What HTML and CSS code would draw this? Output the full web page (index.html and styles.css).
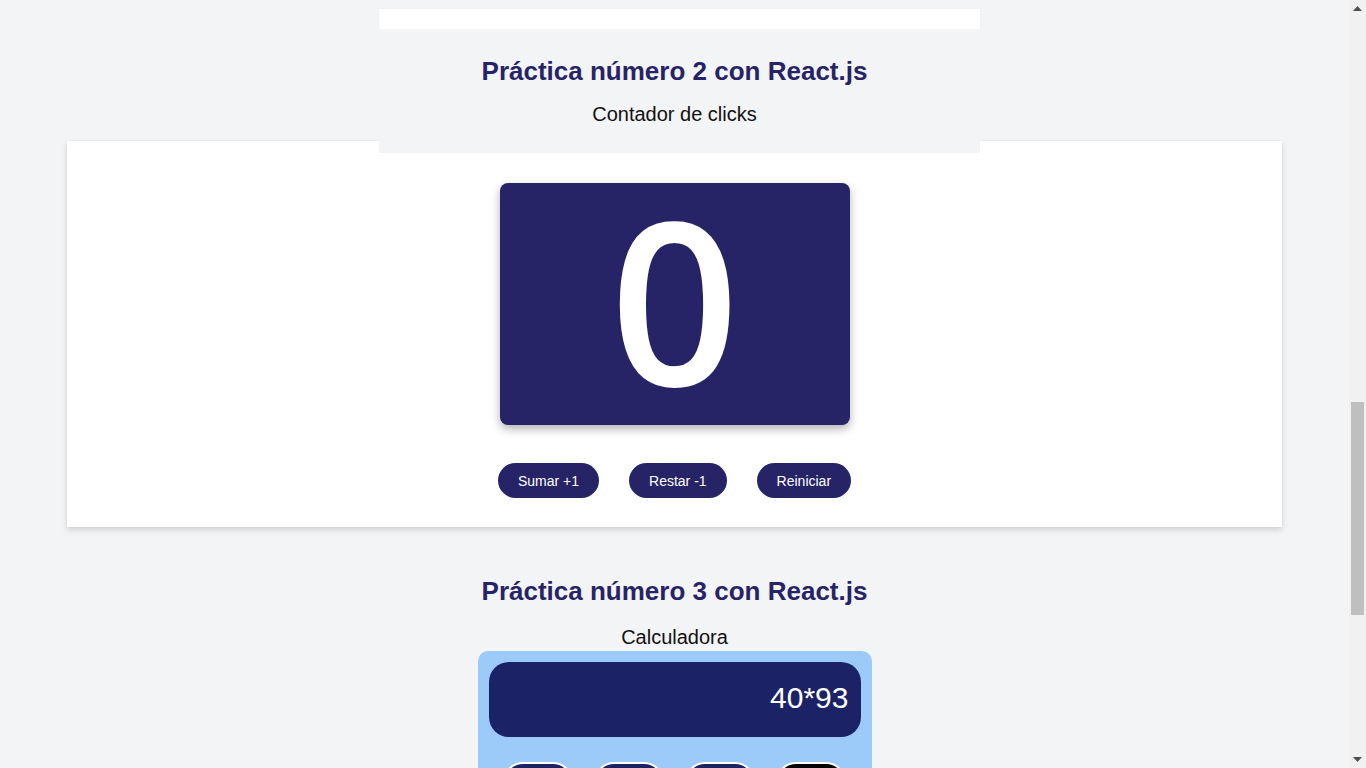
FILE: index.html
```html
<!DOCTYPE html>
<html lang="es">
<head>
<meta charset="utf-8">
<title>Prácticas React.js</title>
<link rel="stylesheet" href="styles.css">
</head>
<body>
<div class="viewport">
  <main class="page">
    <div class="prev-bottom"></div>

    <section class="practice">
      <header class="practice-head">
        <h2 class="practice-title">Práctica número 2 con React.js</h2>
        <p class="practice-sub">Contador de clicks</p>
      </header>
      <div class="card">
        <div class="counter-box"><span class="counter-value">0</span></div>
        <div class="counter-actions">
          <button class="pill-btn">Sumar +1</button>
          <button class="pill-btn">Restar -1</button>
          <button class="pill-btn">Reiniciar</button>
        </div>
      </div>
    </section>

    <section class="practice practice-calc">
      <h2 class="practice-title">Práctica número 3 con React.js</h2>
      <p class="practice-sub calc-sub">Calculadora</p>
      <div class="calculator">
        <div class="calc-display">40*93</div>
        <div class="calc-keys">
          <button class="calc-key"></button>
          <button class="calc-key"></button>
          <button class="calc-key"></button>
          <button class="calc-key calc-key-dark"></button>
        </div>
      </div>
    </section>
  </main>

  <div class="scrollbar">
    <div class="sb-arrow">
      <svg width="9" height="5" viewBox="0 0 9 5"><path d="M0 5 L4.5 0 L9 5 Z" fill="#505050"/></svg>
    </div>
    <div class="sb-track">
      <div class="sb-thumb"></div>
    </div>
    <div class="sb-arrow">
      <svg width="9" height="5" viewBox="0 0 9 5"><path d="M0 0 L9 0 L4.5 5 Z" fill="#505050"/></svg>
    </div>
  </div>
</div>
</body>
</html>
```

FILE: styles.css
```css
* { box-sizing: border-box; }

html, body {
  margin: 0;
  padding: 0;
  height: 768px;
  overflow: hidden;
}

body {
  background: #f3f4f6;
  font-family: "Liberation Sans", Arial, sans-serif;
  color: #111;
}

.viewport {
  display: flex;
  height: 768px;
}

.page {
  flex: 1;
  min-width: 0;
  overflow: hidden;
}

.prev-bottom {
  width: 601px;
  height: 20px;
  margin: 9px 0 0 calc(50% - 296px);
  background: #ffffff;
  box-shadow: 0 0 3px rgba(0, 0, 0, 0.04);
}

.practice-head {
  position: relative;
  z-index: 1;
  width: 601px;
  height: 124px;
  margin: 0 0 -12px calc(50% - 296px);
  padding-top: 27px;
  background: #f3f4f6;
  text-align: center;
}

.practice-head .practice-title {
  margin-left: -9px;
}

.practice-head .practice-sub {
  margin-left: -9px;
}

.practice-title {
  margin: 0;
  font-size: 26px;
  line-height: 30px;
  font-weight: 700;
  color: #262467;
  text-align: center;
}

.practice-sub {
  margin: 16px 0 0;
  font-size: 20px;
  line-height: 24px;
  color: #111;
  text-align: center;
}

.card {
  width: 1215px;
  margin: 0 auto;
  padding: 42px 0 29px;
  background: #ffffff;
  box-shadow: 0 3px 6px rgba(0, 0, 0, 0.14), 0 0 2px rgba(0, 0, 0, 0.05);
}

.counter-box {
  width: 350px;
  height: 242px;
  margin: 0 auto;
  background: #262467;
  border-radius: 8px;
  box-shadow: 0 4px 10px rgba(0, 0, 0, 0.3);
  display: flex;
  align-items: center;
  justify-content: center;
}

.counter-value {
  font-family: "Open Sans", "Noto Sans", sans-serif;
  font-size: 226px;
  font-weight: 600;
  line-height: 1;
  color: #ffffff;
  margin-top: -12px;
}

.counter-actions {
  display: flex;
  justify-content: center;
  gap: 30px;
  margin-top: 38px;
}

.pill-btn {
  height: 35px;
  padding: 0 20px;
  border: none;
  border-radius: 18px;
  background: #262467;
  color: #ffffff;
  font-family: "Liberation Sans", Arial, sans-serif;
  font-size: 14px;
}

.practice-calc {
  margin-top: 49px;
}

.calc-sub {
  margin-top: 19px;
}

.calculator {
  width: 394px;
  margin: 2px auto 0;
  padding: 11px;
  background: #9dcbf9;
  border-radius: 10px;
}

.calc-display {
  height: 75px;
  padding-right: 12px;
  padding-bottom: 3px;
  border-radius: 20px;
  background: #1b2266;
  color: #ffffff;
  font-size: 30px;
  display: flex;
  align-items: center;
  justify-content: flex-end;
}

.calc-keys {
  display: flex;
  justify-content: center;
  gap: 21px;
  margin-top: 25px;
}

.calc-key {
  width: 70px;
  height: 60px;
  border: 2px solid #ffffff;
  border-radius: 20px;
  background: #1b2266;
}

.calc-key-dark {
  background: #000000;
}

.scrollbar {
  width: 17px;
  flex: none;
  background: #f1f1f1;
  display: flex;
  flex-direction: column;
}

.sb-arrow {
  height: 17px;
  display: flex;
  align-items: center;
  justify-content: center;
}

.sb-track {
  flex: 1;
}

.sb-thumb {
  width: 13px;
  height: 213px;
  margin: 385px 2px 0;
  background: #bfbfbf;
}
```
